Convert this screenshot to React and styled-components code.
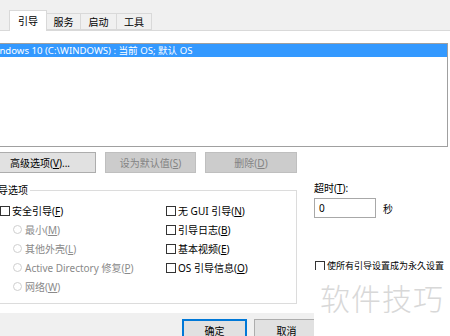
import React from "react";
import styled, { createGlobalStyle } from "styled-components";

const GlobalStyle = createGlobalStyle`
  html, body {
    margin: 0;
    padding: 0;
    background: #fff;
  }
  body {
    font-family: "Noto Sans", "Noto Sans CJK SC", sans-serif;
    font-size: 10px;
    color: #000;
  }
`;

const Screen = styled.div`
  position: relative;
  width: 450px;
  height: 336px;
  overflow: hidden;
  background: #fff;
`;

const Window = styled.div`
  width: 470px;
  margin-left: -20px;
  display: flex;
  flex-direction: column;
`;

const TabStrip = styled.div`
  height: 30px;
  display: flex;
  align-items: flex-end;
  padding-left: 30px;
  background: #f0f0f0;
  border-bottom: 1px solid #d9d9d9;
`;

const Tab = styled.div`
  box-sizing: border-box;
  width: ${({ $w }) => $w}px;
  height: ${({ $active }) => ($active ? 21 : 17)}px;
  margin-bottom: ${({ $active }) => ($active ? -1 : 0)}px;
  margin-left: -1px;
  display: flex;
  align-items: center;
  justify-content: center;
  padding-bottom: ${({ $active }) => ($active ? 2 : 0)}px;
  background: ${({ $active }) => ($active ? "#fff" : "#f0f0f0")};
  border: 1px solid #d9d9d9;
  border-bottom: ${({ $active }) => ($active ? "none" : "1px solid #d9d9d9")};
  position: relative;
  z-index: ${({ $active }) => ($active ? 1 : 0)};
`;

const Page = styled.div`
  background: #fff;
  padding: 12px 2px 9px 0;
`;

const ListBox = styled.div`
  box-sizing: border-box;
  height: 104px;
  border: 1px solid #a0a0a0;
`;

const ListRow = styled.div`
  height: 13px;
  line-height: 13px;
  padding-left: 7px;
  white-space: nowrap;
  font-size: 9.6px;
  background: ${({ $selected }) => ($selected ? "#3399ff" : "transparent")};
  color: ${({ $selected }) => ($selected ? "#fff" : "#000")};
`;

const ButtonRow = styled.div`
  display: flex;
  gap: 9px;
  margin-top: 5px;
  padding-left: 4px;
`;

const Button = styled.div`
  box-sizing: border-box;
  width: ${({ $w }) => $w}px;
  height: ${({ $h }) => $h || 21}px;
  display: flex;
  align-items: center;
  justify-content: center;
  white-space: nowrap;
  background: ${({ $disabled }) => ($disabled ? "#cccccc" : "#e1e1e1")};
  border: 1px solid
    ${({ $disabled, $default }) =>
      $default ? "#0078d7" : $disabled ? "#bfbfbf" : "#adadad"};
  box-shadow: ${({ $default }) => ($default ? "inset 0 0 0 1px #0078d7" : "none")};
  color: ${({ $disabled }) => ($disabled ? "#838383" : "#000")};
`;

const Middle = styled.div`
  display: flex;
  align-items: flex-start;
  margin-top: 11px;
`;

const Group = styled.fieldset`
  box-sizing: border-box;
  width: 317px;
  min-width: 0;
  margin: 0;
  padding: 5px 0 7px 19px;
  border: 1px solid #dcdcdc;
`;

const Legend = styled.legend`
  margin-left: -14px;
  padding: 0 2px;
  font-size: 10px;
  line-height: 12px;
`;

const OptionGrid = styled.div`
  display: grid;
  grid-template-columns: 166px 1fr;
  grid-template-rows: repeat(5, 19px);
  grid-auto-flow: column;
  align-items: center;
`;

const Option = styled.div`
  display: flex;
  align-items: center;
  white-space: nowrap;
  line-height: 12px;
  padding-left: ${({ $radio }) => ($radio ? 13 : 0)}px;
  color: ${({ $radio }) => ($radio ? "#8a8a8a" : "#000")};
`;

const CheckBox = styled.span`
  box-sizing: border-box;
  width: 10px;
  height: 10px;
  margin-right: 2px;
  border: 1px solid #333;
  border-bottom-color: ${({ $open }) => ($open ? "transparent" : "#333")};
  background: #fff;
  flex: none;
`;

const Radio = styled.span`
  box-sizing: border-box;
  width: 9px;
  height: 9px;
  margin-right: 3px;
  border-radius: 50%;
  border: 1px solid #cfcfcf;
  flex: none;
`;

const SideColumn = styled.div`
  display: flex;
  flex-direction: column;
  margin-left: 17px;
`;

const SideLabel = styled.div`
  line-height: 12px;
  margin-top: -2px;
`;

const TimeoutRow = styled.div`
  display: flex;
  align-items: center;
  gap: 7px;
  margin-top: 4px;
`;

const TextInput = styled.div`
  box-sizing: border-box;
  width: 62px;
  height: 20px;
  padding: 2px 0 0 4px;
  border: 1px solid #a8a8a8;
  background: #fff;
  line-height: 14px;
`;

const PermanentRow = styled(Option)`
  margin-top: 42px;
  margin-left: 1px;
  font-size: 9px;
`;

const Footer = styled.div`
  display: flex;
  gap: 7px;
  height: 40px;
  padding: 6px 0 0 202px;
  background: #f0f0f0;
`;

const Watermark = styled.div`
  position: absolute;
  right: 0;
  bottom: 0;
  width: 136px;
  height: 66px;
  padding-top: 12px;
  box-sizing: border-box;
  background: #fff;
  text-align: center;
  font-size: 30px;
  line-height: 34px;
  letter-spacing: 1px;
  color: #d8d8d8;
  font-weight: 300;
`;

export default function App() {
  return (
    <>
      <GlobalStyle />
      <Screen>
        <Window>
          <TabStrip>
            <Tab $w={38} $active>引导</Tab>
            <Tab $w={35}>服务</Tab>
            <Tab $w={37}>启动</Tab>
            <Tab $w={36}>工具</Tab>
          </TabStrip>
          <Page>
            <ListBox>
              <ListRow $selected>
                Windows 10 (C:\WINDOWS) : 当前 OS; 默认 OS
              </ListRow>
            </ListBox>
            <ButtonRow>
              <Button $w={112}>
                高级选项(<u>V</u>)...
              </Button>
              <Button $w={91} $disabled>
                设为默认值(<u>S</u>)
              </Button>
              <Button $w={92} $disabled>
                删除(<u>D</u>)
              </Button>
            </ButtonRow>
            <Middle>
              <Group>
                <Legend>引导选项</Legend>
                <OptionGrid>
                  <Option>
                    <CheckBox />安全引导(<u>F</u>)
                  </Option>
                  <Option $radio>
                    <Radio />最小(<u>M</u>)
                  </Option>
                  <Option $radio>
                    <Radio />其他外壳(<u>L</u>)
                  </Option>
                  <Option $radio>
                    <Radio />Active Directory 修复(<u>P</u>)
                  </Option>
                  <Option $radio>
                    <Radio />网络(<u>W</u>)
                  </Option>
                  <Option>
                    <CheckBox />无 GUI 引导(<u>N</u>)
                  </Option>
                  <Option>
                    <CheckBox />引导日志(<u>B</u>)
                  </Option>
                  <Option>
                    <CheckBox />基本视频(<u>E</u>)
                  </Option>
                  <Option>
                    <CheckBox />OS 引导信息(<u>O</u>)
                  </Option>
                </OptionGrid>
              </Group>
              <SideColumn>
                <SideLabel>
                  超时(<u>T</u>):
                </SideLabel>
                <TimeoutRow>
                  <TextInput>0</TextInput>
                  <span>秒</span>
                </TimeoutRow>
                <PermanentRow>
                  <CheckBox $open />使所有引导设置成为永久设置
                </PermanentRow>
              </SideColumn>
            </Middle>
          </Page>
          <Footer>
            <Button $w={65} $h={22} $default>
              确定
            </Button>
            <Button $w={65} $h={22}>
              取消
            </Button>
          </Footer>
        </Window>
        <Watermark>软件技巧</Watermark>
      </Screen>
    </>
  );
}
